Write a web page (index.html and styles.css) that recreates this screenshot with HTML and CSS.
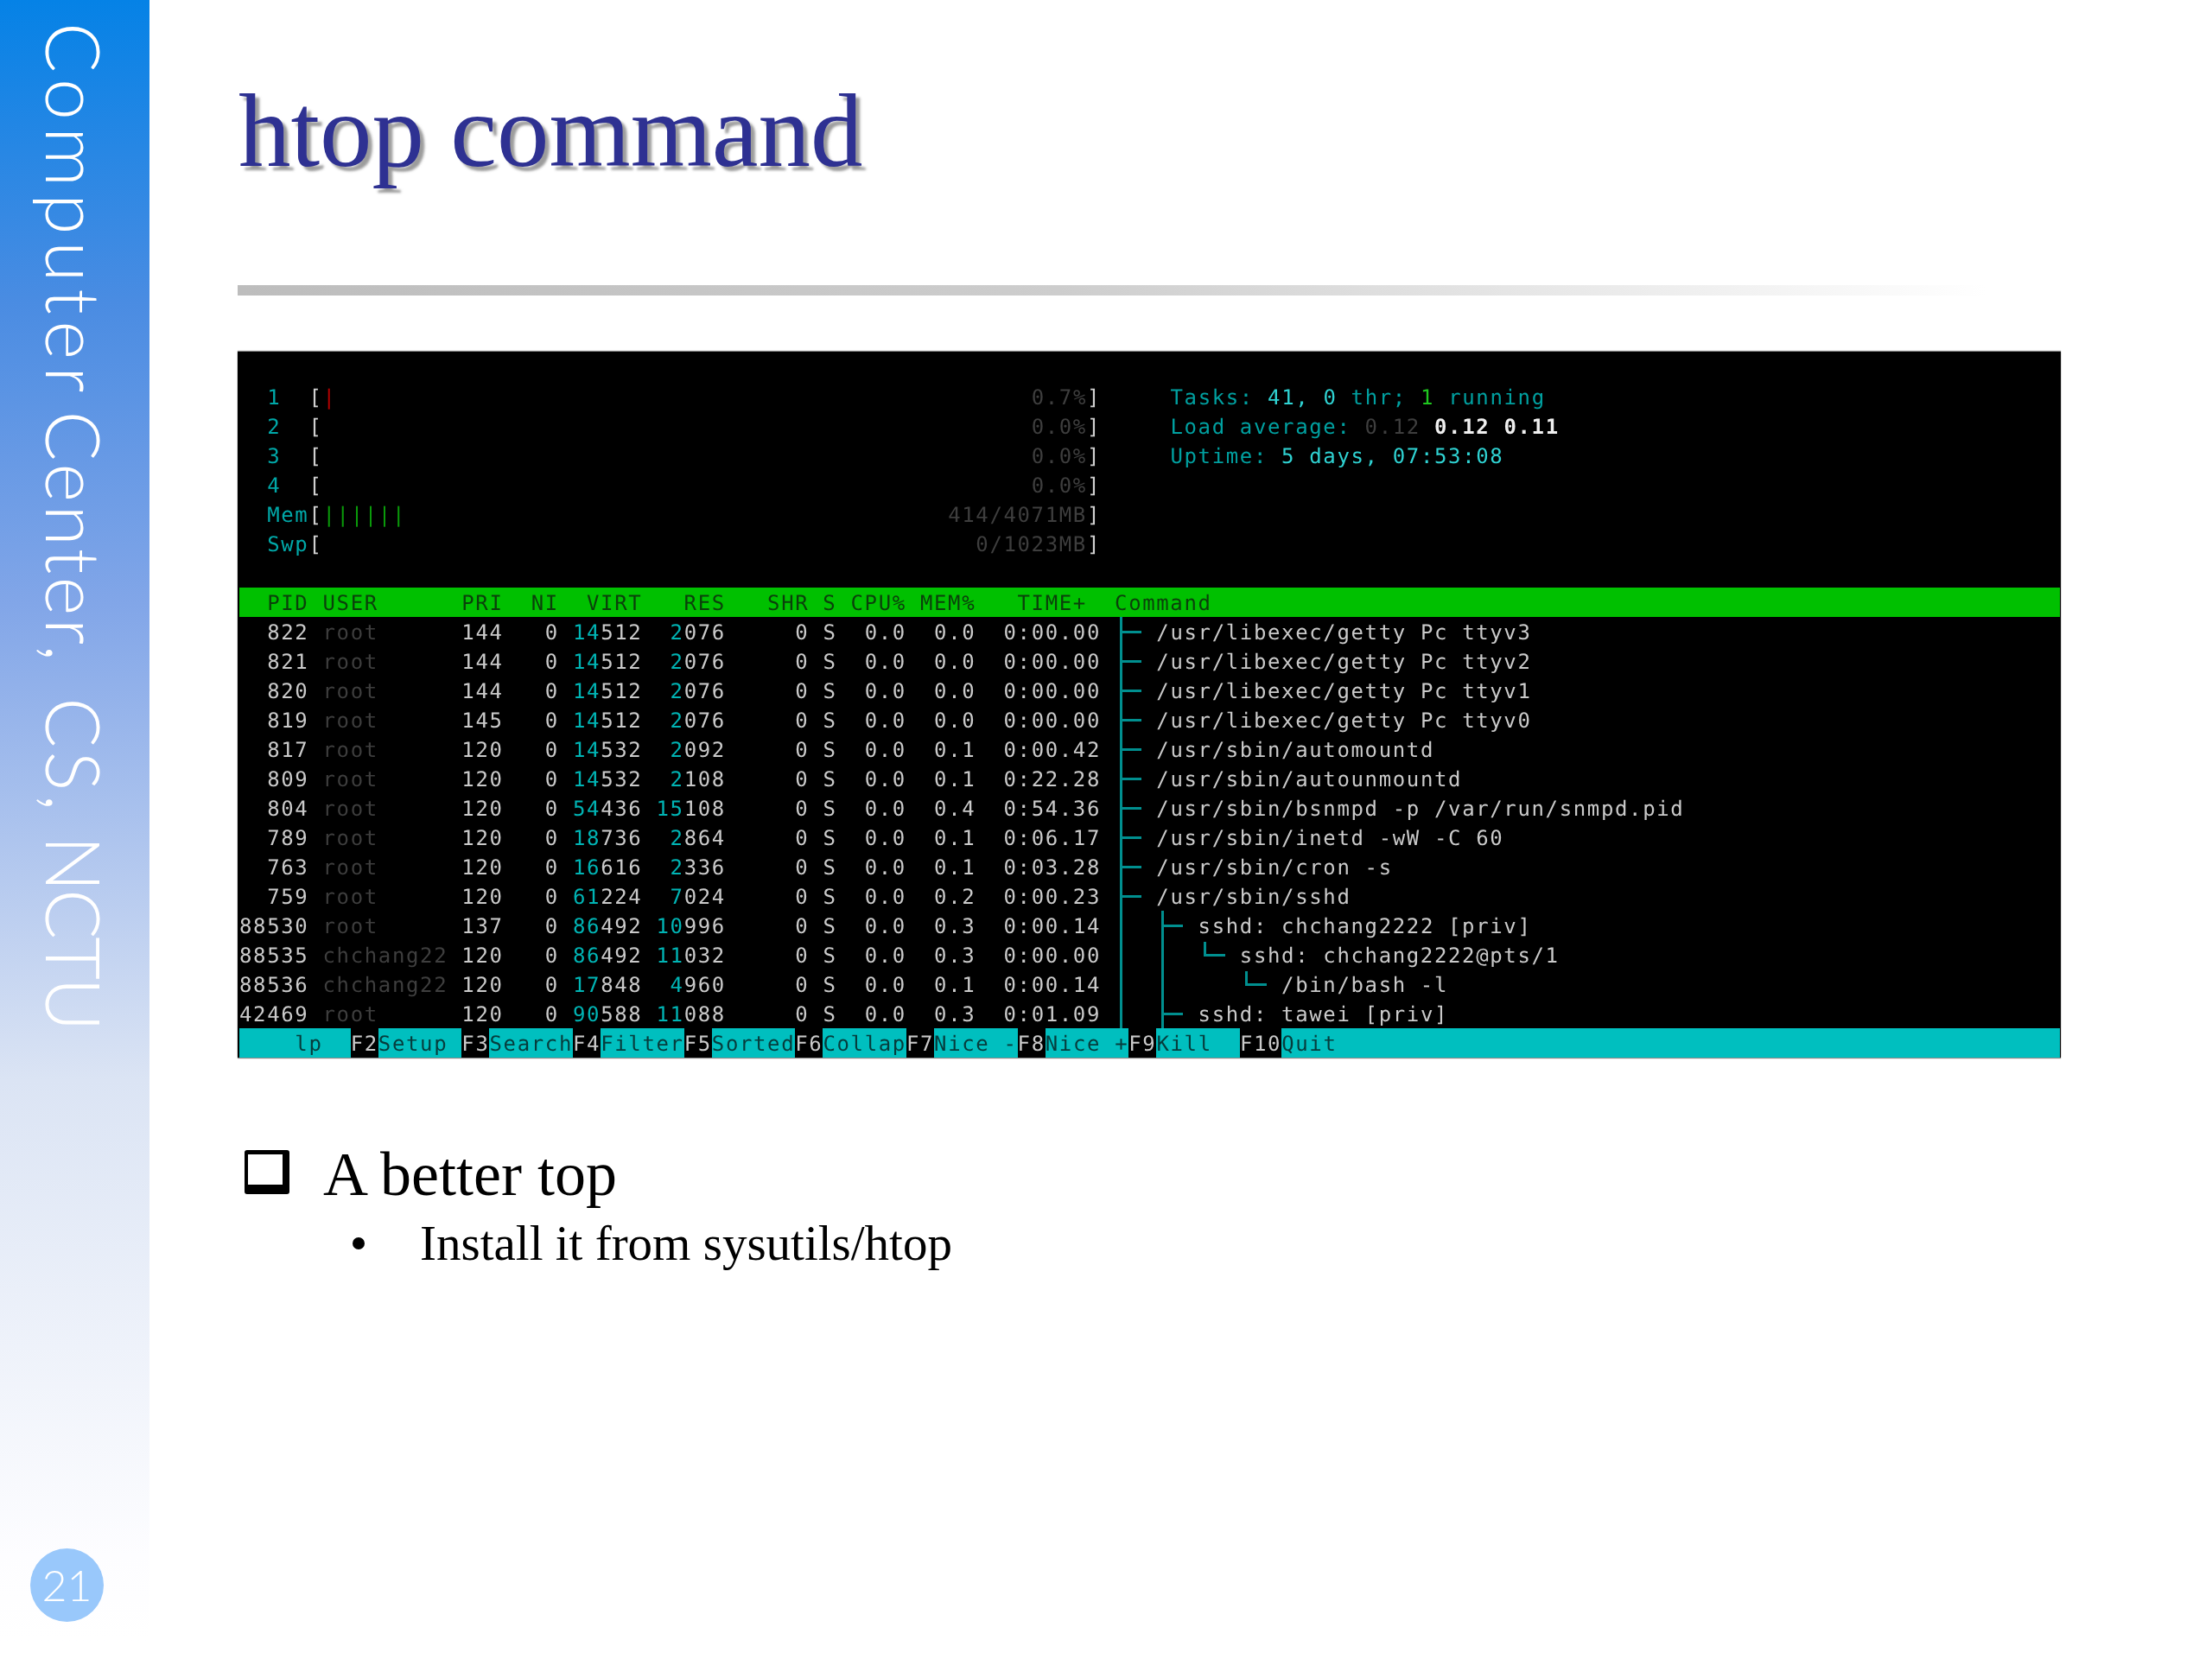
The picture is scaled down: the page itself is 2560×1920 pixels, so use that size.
FILE: index.html
```html
<!DOCTYPE html>
<html lang="en">
<head>
<meta charset="utf-8">
<title>htop command</title>
<link rel="stylesheet" href="styles.css">
</head>
<body>
<div class="slide">
  <aside class="sidebar">
    <div class="side-title"><span class="w1">Computer </span><span class="w2">Center, </span><span class="w3">CS, </span><span class="w4">NCTU</span></div>
    <div class="page-no">21</div>
  </aside>
  <main class="main">
    <h1 class="title">htop command</h1>
    <div class="rule"></div>
    <div class="term">
<div class="row"> </div>
<div class="row">  <span class="n">1</span>  <span class="b">[</span><span class="red">|</span>                                                  <span class="d">0.7%</span><span class="b">]</span>     <span class="t">Tasks:</span> <span class="h">41,</span> <span class="h">0</span> <span class="t">thr;</span> <span class="g">1</span> <span class="t">running</span></div>
<div class="row">  <span class="n">2</span>  <span class="b">[</span>                                                   <span class="d">0.0%</span><span class="b">]</span>     <span class="t">Load average:</span> <span class="d">0.12</span> <span class="w">0.12</span> <span class="w">0.11</span></div>
<div class="row">  <span class="n">3</span>  <span class="b">[</span>                                                   <span class="d">0.0%</span><span class="b">]</span>     <span class="t">Uptime:</span> <span class="h">5 days, 07:53:08</span></div>
<div class="row">  <span class="n">4</span>  <span class="b">[</span>                                                   <span class="d">0.0%</span><span class="b">]</span></div>
<div class="row">  <span class="n">Mem</span><span class="b">[</span><span class="bar">||||||</span>                                       <span class="d">414/4071MB</span><span class="b">]</span></div>
<div class="row">  <span class="n">Swp</span><span class="b">[</span>                                               <span class="d">0/1023MB</span><span class="b">]</span></div>
<div class="row"> </div>
<div class="row head">  PID USER      PRI  NI  VIRT   RES   SHR S CPU% MEM%   TIME+  Command</div>
<div class="row">  822 <span class="d">root     </span> 144   0 <span class="c">14</span>512  <span class="c">2</span>076     0 S  0.0  0.0  0:00.00 <span class="tb"></span> /usr/libexec/getty Pc ttyv3</div>
<div class="row">  821 <span class="d">root     </span> 144   0 <span class="c">14</span>512  <span class="c">2</span>076     0 S  0.0  0.0  0:00.00 <span class="tb"></span> /usr/libexec/getty Pc ttyv2</div>
<div class="row">  820 <span class="d">root     </span> 144   0 <span class="c">14</span>512  <span class="c">2</span>076     0 S  0.0  0.0  0:00.00 <span class="tb"></span> /usr/libexec/getty Pc ttyv1</div>
<div class="row">  819 <span class="d">root     </span> 145   0 <span class="c">14</span>512  <span class="c">2</span>076     0 S  0.0  0.0  0:00.00 <span class="tb"></span> /usr/libexec/getty Pc ttyv0</div>
<div class="row">  817 <span class="d">root     </span> 120   0 <span class="c">14</span>532  <span class="c">2</span>092     0 S  0.0  0.1  0:00.42 <span class="tb"></span> /usr/sbin/automountd</div>
<div class="row">  809 <span class="d">root     </span> 120   0 <span class="c">14</span>532  <span class="c">2</span>108     0 S  0.0  0.1  0:22.28 <span class="tb"></span> /usr/sbin/autounmountd</div>
<div class="row">  804 <span class="d">root     </span> 120   0 <span class="c">54</span>436 <span class="c">15</span>108     0 S  0.0  0.4  0:54.36 <span class="tb"></span> /usr/sbin/bsnmpd -p /var/run/snmpd.pid</div>
<div class="row">  789 <span class="d">root     </span> 120   0 <span class="c">18</span>736  <span class="c">2</span>864     0 S  0.0  0.1  0:06.17 <span class="tb"></span> /usr/sbin/inetd -wW -C 60</div>
<div class="row">  763 <span class="d">root     </span> 120   0 <span class="c">16</span>616  <span class="c">2</span>336     0 S  0.0  0.1  0:03.28 <span class="tb"></span> /usr/sbin/cron -s</div>
<div class="row">  759 <span class="d">root     </span> 120   0 <span class="c">61</span>224  <span class="c">7</span>024     0 S  0.0  0.2  0:00.23 <span class="tb"></span> /usr/sbin/sshd</div>
<div class="row">88530 <span class="d">root     </span> 137   0 <span class="c">86</span>492 <span class="c">10</span>996     0 S  0.0  0.3  0:00.14 <span class="tv"></span><span class="tb"></span> sshd: chchang2222 [priv]</div>
<div class="row">88535 <span class="d">chchang22</span> 120   0 <span class="c">86</span>492 <span class="c">11</span>032     0 S  0.0  0.3  0:00.00 <span class="tv"></span><span class="tv"></span><span class="tl"></span> sshd: chchang2222@pts/1</div>
<div class="row">88536 <span class="d">chchang22</span> 120   0 <span class="c">17</span>848  <span class="c">4</span>960     0 S  0.0  0.1  0:00.14 <span class="tv"></span><span class="tv"></span><span class="gap"></span><span class="tl"></span> /bin/bash -l</div>
<div class="row">42469 <span class="d">root     </span> 120   0 <span class="c">90</span>588 <span class="c">11</span>088     0 S  0.0  0.3  0:01.09 <span class="tv"></span><span class="tb"></span> sshd: tawei [priv]</div>
<div class="row foot">    lp  <span class="fk">F2</span>Setup <span class="fk">F3</span>Search<span class="fk">F4</span>Filter<span class="fk">F5</span>Sorted<span class="fk">F6</span>Collap<span class="fk">F7</span>Nice -<span class="fk">F8</span>Nice +<span class="fk">F9</span>Kill  <span class="fk">F10</span>Quit</div>
    </div>
    <div class="item item-main">
      <span class="box"></span>
      <span>A better top</span>
    </div>
    <div class="item item-sub">
      <span class="dot"></span>
      <span>Install it from sysutils/htop</span>
    </div>
  </main>
</div>
</body>
</html>
```

FILE: styles.css
```css
:root { --cell: 16.08px; --teal: #008f8f; }
* { box-sizing: border-box; }
html, body { margin: 0; padding: 0; background: #fff; }
.slide { display: flex; width: 2560px; height: 1920px; overflow: hidden; }

.sidebar {
  width: 173px;
  height: 1900px;
  flex: none;
  display: flex;
  flex-direction: column;
  background: linear-gradient(180deg, #0582e6 0, #4a8ce2 350px, #82a6e8 700px, #dbe4f4 1250px, #fdfdff 1800px, #fff 1900px);
  padding: 26px 0 23px;
}
.side-title {
  writing-mode: vertical-rl;
  font-family: Lato, "Open Sans", sans-serif;
  font-weight: 300;
  font-size: 86px;
  line-height: 173px;
  height: 1180px;
  color: #fff;
  white-space: nowrap;
  filter: blur(.5px);
}
.w1 { letter-spacing: 7.8px; word-spacing: -16px; }
.w2 { letter-spacing: 3.45px; word-spacing: 12px; }
.w3 { letter-spacing: 4.1px; word-spacing: -3px; }
.w4 { letter-spacing: -2.9px; }
.page-no {
  margin: auto 0 0 35px;
  width: 85px;
  height: 85px;
  border-radius: 50%;
  background: #99c8fb;
  color: #fff;
  font-family: Lato, sans-serif;
  font-weight: 300;
  font-size: 50px;
  line-height: 85px;
  text-align: center;
}

.main { flex: 1; padding: 91px 0 0 102px; min-width: 0; }
.title {
  margin: 0 0 0 1px;
  font-family: "Liberation Serif", serif;
  font-weight: 400;
  font-size: 121px;
  line-height: 120px;
  color: #2e3192;
  text-shadow: 5px 5px 3px rgba(90, 90, 90, .6);
}
.rule {
  width: 2110px;
  height: 12px;
  margin-top: 119px;
  background: linear-gradient(90deg, #bdbdbd 0, #cdcdcd 45%, #fff 96%);
}

.term {
  width: 2110px;
  height: 817px;
  margin-top: 65px;
  padding: 1px 1px 0 2px;
  background: #000;
  color: #cacaca;
  box-shadow: 0 -1px 1px #888, 0 1px 1px #888;
  font-family: "DejaVu Sans Mono", "Liberation Mono", monospace;
  font-size: 24px;
  letter-spacing: 1.631px;
  text-rendering: geometricPrecision;
  overflow: hidden;
}
.row { height: 34px; line-height: 37px; white-space: pre; filter: blur(.55px); }
.head { background: #00c000; color: #0b3f0b; }
.foot { background: #00bfbf; color: #063c3c; }
.fk { background: #000; color: #cacaca; display: inline-block; height: 34px; vertical-align: top; }
.n { color: #00a8a8; }
.b { color: #d0d0d0; }
.red { color: #b00000; }
.bar { color: #0a9a0a; }
.d { color: #3e3e3e; }
.t { color: #00a0a0; }
.h { color: #2fd2d2; }
.g { color: #1fc81f; }
.w { color: #efefef; font-weight: 700; }
.c { color: #00b4b4; }

.tb, .tv, .tl, .gap { display: inline-block; height: 34px; vertical-align: top; }
.tv { width: calc(var(--cell) * 3); background: linear-gradient(var(--teal), var(--teal)) 6px 0 / 3px 100% no-repeat; }
.gap { width: calc(var(--cell) * 3); }
.tb {
  width: calc(var(--cell) * 2);
  background:
    linear-gradient(var(--teal), var(--teal)) 6px 0 / 3px 100% no-repeat,
    linear-gradient(var(--teal), var(--teal)) 6px 16px / 25px 3px no-repeat;
}
.tl {
  width: calc(var(--cell) * 2);
  background:
    linear-gradient(var(--teal), var(--teal)) 6px 2px / 3px 17px no-repeat,
    linear-gradient(var(--teal), var(--teal)) 6px 16px / 25px 3px no-repeat;
}

.item { display: flex; font-family: "Liberation Serif", serif; color: #000; }
.item-main { margin-top: 93px; padding-left: 8px; gap: 39px; font-size: 72px; line-height: 84px; }
.item-sub { margin-top: 2px; padding-left: 133px; gap: 64px; font-size: 57px; line-height: 72px; }
.box {
  width: 52px;
  height: 51px;
  margin-top: 14px;
  border: solid #000;
  border-width: 5px 8px 11px 4px;
  border-radius: 3px;
}
.dot { width: 14px; height: 14px; margin-top: 29px; border-radius: 50%; background: #000; }
```
